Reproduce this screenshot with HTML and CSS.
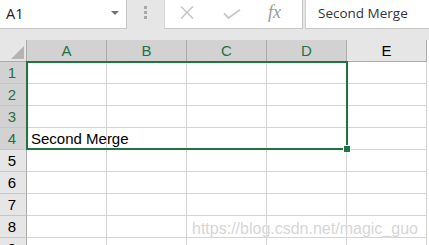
FILE: index.html
```html
<!DOCTYPE html>
<html>
<head>
<meta charset="utf-8">
<link rel="stylesheet" href="styles.css">
</head>
<body>
<div class="app">
  <div class="toolbar">
    <div class="namebox"><span class="nb-text">A1</span><span class="nb-arrow"></span></div>
    <div class="grip"><i></i><i></i><i></i></div>
    <div class="iconbox">
      <svg class="ic ic-x" width="18" height="13" viewBox="0 0 18 13"><path d="M3 0.5 L15 12.5 M15 0.5 L3 12.5" stroke="#c8c8c8" stroke-width="1.6" fill="none"/></svg>
      <svg class="ic ic-check" width="18" height="10" viewBox="0 0 18 10"><path d="M1 4.5 L5.5 9 L17 0.8" stroke="#c8c8c8" stroke-width="1.8" fill="none"/></svg>
      <span class="fx">fx</span>
    </div>
    <div class="formula">Second Merge</div>
  </div>
  <div class="sheet">
    <div class="grid">
      <div class="corner"><span class="tri"></span></div>
      <div class="ch sel">A</div><div class="ch sel">B</div><div class="ch sel">C</div><div class="ch sel">D</div><div class="ch">E</div>

      <div class="rh sel">1</div><div class="c"></div><div class="c"></div><div class="c"></div><div class="c"></div><div class="c"></div>
      <div class="rh sel">2</div><div class="c"></div><div class="c"></div><div class="c"></div><div class="c"></div><div class="c"></div>
      <div class="rh sel">3</div><div class="c"></div><div class="c"></div><div class="c"></div><div class="c"></div><div class="c"></div>
      <div class="rh sel">4</div><div class="c txt">Second Merge</div><div class="c"></div><div class="c"></div><div class="c"></div><div class="c"></div>
      <div class="rh">5</div><div class="c"></div><div class="c"></div><div class="c"></div><div class="c"></div><div class="c"></div>
      <div class="rh">6</div><div class="c"></div><div class="c"></div><div class="c"></div><div class="c"></div><div class="c"></div>
      <div class="rh">7</div><div class="c"></div><div class="c"></div><div class="c"></div><div class="c"></div><div class="c"></div>
      <div class="rh">8</div><div class="c"></div><div class="c"></div><div class="c"></div><div class="c"></div><div class="c"></div>
      <div class="rh">9</div><div class="c"></div><div class="c"></div><div class="c"></div><div class="c"></div><div class="c"></div>
    </div>
    <div class="selection"><span class="handle"></span></div>
    <div class="watermark">https://blog.csdn.net/magic_guo</div>
  </div>
</div>
</body>
</html>
```
FILE: styles.css
```css
html, body {
  margin: 0;
  padding: 0;
}
body {
  background: #e6e6e6;
  width: 429px;
  height: 245px;
  overflow: hidden;
  font-family: "Liberation Sans", Arial, sans-serif;
}
.app {
  width: 429px;
  height: 245px;
  overflow: hidden;
}
.toolbar {
  height: 40px;
  display: flex;
  align-items: flex-start;
  background: #e6e6e6;
}
.namebox {
  width: 126px;
  height: 28px;
  background: #fff;
  border-right: 1px solid #c6c6c6;
  border-bottom: 1px solid #c6c6c6;
  display: flex;
  align-items: center;
  justify-content: space-between;
  box-sizing: content-box;
}
.nb-text {
  font-family: "Open Sans", "Noto Sans", sans-serif;
  font-size: 14.5px;
  color: #222;
  margin-left: 6px;
  margin-top: -1px;
}
.nb-arrow {
  width: 0;
  height: 0;
  border-left: 4px solid transparent;
  border-right: 4px solid transparent;
  border-top: 4px solid #727272;
  margin-right: 7px;
  margin-top: -2px;
}
.grip {
  width: 37px;
  height: 29px;
  display: flex;
  flex-direction: column;
  align-items: center;
  padding-top: 6px;
  gap: 2px;
  box-sizing: border-box;
}
.grip i {
  display: block;
  width: 3px;
  height: 3px;
  background: #a8a8a8;
}
.iconbox {
  width: 139px;
  height: 29px;
  background: #fff;
  border-right: 1px solid #c6c6c6;
  border-bottom: 1px solid #c6c6c6;
  border-left: 1px solid #d8d8d8;
  box-sizing: border-box;
  position: relative;
  display: flex;
  align-items: center;
}
.ic-x {
  margin-left: 13px;
  margin-top: -3px;
}
.ic-check {
  margin-left: 27px;
  margin-top: 0px;
}
.fx {
  font-family: "Liberation Serif", "Times New Roman", serif;
  font-style: italic;
  font-size: 18px;
  color: #9a9a9a;
  margin-left: 27px;
  margin-top: -3px;
}
.formula {
  margin-left: 2px;
  flex: 1;
  height: 29px;
  background: #fff;
  border-left: 1px solid #d0d0d0;
  border-bottom: 1px solid #c6c6c6;
  box-sizing: border-box;
  font-family: "Open Sans", "Noto Sans", sans-serif;
  font-size: 13.5px;
  color: #333;
  padding-left: 12px;
  line-height: 26px;
  white-space: nowrap;
  overflow: hidden;
}
.sheet {
  position: relative;
  background: #fff;
}
.grid {
  display: grid;
  grid-template-columns: 27px repeat(5, 80px);
  grid-template-rows: 22px repeat(9, 22px);
  width: 429px;
}
.corner {
  background: #e6e6e6;
  border-right: 1px solid #ababab;
  border-bottom: 1px solid #ababab;
  box-sizing: border-box;
  position: relative;
}
.tri {
  position: absolute;
  right: 2px;
  bottom: 2px;
  width: 0;
  height: 0;
  border-left: 13px solid transparent;
  border-bottom: 13px solid #b4b4b4;
}
.ch {
  background: #e6e6e6;
  border-right: 1px solid #ababab;
  border-bottom: 1px solid #ababab;
  box-sizing: border-box;
  font-size: 15px;
  color: #000;
  text-align: center;
  line-height: 22px;
}
.ch.sel {
  background: #d2d2d2;
  color: #217346;
}
.rh {
  background: #e6e6e6;
  border-right: 1px solid #ababab;
  border-bottom: 1px solid #c6c6c6;
  box-sizing: border-box;
  font-size: 15px;
  color: #000;
  text-align: center;
  line-height: 22px;
  padding-right: 2px;
}
.rh.sel {
  background: #d2d2d2;
  color: #217346;
}
.c {
  border-right: 1px solid #d4d4d4;
  border-bottom: 1px solid #d4d4d4;
  box-sizing: border-box;
  background: #fff;
}
.c.txt {
  font-size: 15px;
  color: #000;
  line-height: 22px;
  padding-left: 4px;
  white-space: nowrap;
  position: relative;
  z-index: 1;
}
.selection {
  position: absolute;
  left: 26px;
  top: 21px;
  width: 322px;
  height: 89px;
  border: 2px solid #217346;
  box-sizing: border-box;
  z-index: 2;
}
.handle {
  position: absolute;
  right: -5px;
  bottom: -5px;
  width: 6px;
  height: 6px;
  background: #217346;
  border: 1px solid #fff;
}
.watermark {
  position: absolute;
  left: 192px;
  top: 180px;
  font-size: 16px;
  color: #d6d6d6;
  text-shadow: 0 0 1px #fff;
  white-space: nowrap;
  z-index: 3;
}
```
